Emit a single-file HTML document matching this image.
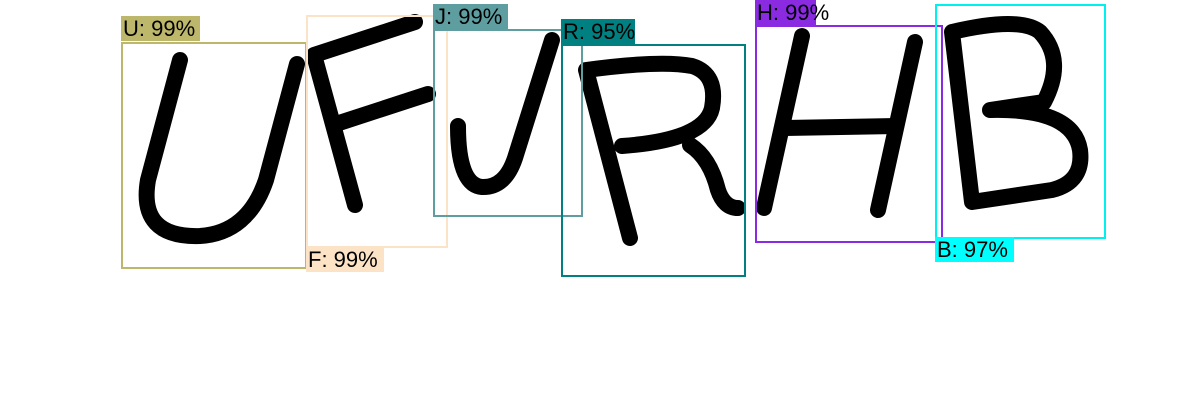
<!DOCTYPE html>
<html><head><style>
body{margin:0;background:#fff;width:1200px;height:420px;overflow:hidden;position:relative;font-family:"Liberation Sans",sans-serif}
.b{position:absolute;box-sizing:border-box;border:2px solid}
.l{position:absolute;font-size:22px;line-height:25px;color:#000;padding-left:2px;box-sizing:border-box;height:25px;white-space:nowrap;overflow:visible}
svg{position:absolute;left:0;top:0}
</style></head><body>
<svg width="1200" height="420" fill="none" stroke="#000" stroke-width="16" stroke-linecap="round" stroke-linejoin="round">
<path d="M180,60 L148,180 Q138,238 200,236 Q248,233 266,180 L297,64"/>
<path d="M355,205 L314,55 L415,22"/>
<path d="M336,124 L428,94"/>
<path d="M552,40 L515,158 Q505,188 482,187 Q458,185 458,126"/>
<path d="M630,238 L586,70 Q660,60 692,66 Q718,74 712,108 Q705,140 622,146"/>
<path d="M690,145 Q710,158 718,190 Q724,208 738,208"/>
<path d="M802,36 L764,208"/>
<path d="M915,42 L878,210"/>
<path d="M785,128 L896,126"/>
<path d="M952,32 L972,202 L1052,190 Q1084,182 1080,150 Q1073,108 990,110 L1044,102 Q1066,60 1040,32 Q1020,16 952,32"/>
</svg>
<div class="b" style="left:121px;top:42px;width:186px;height:227px;border-color:#bdb76b"></div>
<div class="l" style="left:121px;top:16px;width:79px;background:#bdb76b">U: 99%</div>
<div class="b" style="left:306px;top:15px;width:142px;height:233px;border-color:#fbe3c8"></div>
<div class="l" style="left:306px;top:247px;width:78px;background:#fde3c6">F: 99%</div>
<div class="b" style="left:433px;top:29px;width:150px;height:188px;border-color:#5f9ea0"></div>
<div class="l" style="left:433px;top:4px;width:75px;background:#5f9ea0">J: 99%</div>
<div class="b" style="left:561px;top:44px;width:185px;height:233px;border-color:#008080"></div>
<div class="l" style="left:561px;top:19px;width:74px;background:#008080">R: 95%</div>
<div class="b" style="left:755px;top:25px;width:188px;height:218px;border-color:#8a2be2"></div>
<div class="l" style="left:755px;top:0px;width:61px;background:#8a2be2">H: 99%</div>
<div class="b" style="left:935px;top:4px;width:171px;height:235px;border-color:#00f0f0"></div>
<div class="l" style="left:935px;top:237px;width:79px;background:#00ffff">B: 97%</div>
</body></html>
